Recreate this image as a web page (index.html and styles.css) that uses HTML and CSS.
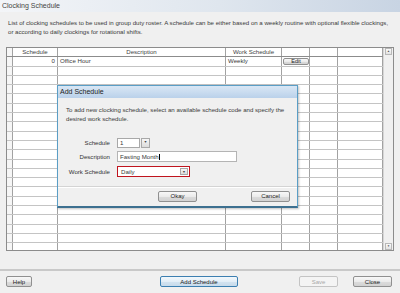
FILE: index.html
```html
<!DOCTYPE html>
<html lang="en">
<head>
  <meta charset="UTF-8">
  <title>Clocking Schedule</title>
  <link rel="stylesheet" href="styles.css">
</head>
<body>

  <div class="titlebar">Clocking Schedule</div>

  <p class="intro">List of clocking schedules to be used in group duty roster. A schedule can be either based on a weekly routine with optional flexible clockings,<br>or according to daily clockings for rotational shifts.</p>

  <div class="grid">
    <div class="rows">
      <div class="row head"><span></span><span>Schedule</span><span>Description</span><span>Work Schedule</span><span></span><span></span><span></span></div>
      <div class="row"><span></span><span class="num">0</span><span>Office Hour</span><span>Weekly</span><span class="cell-btn"><button class="btn btn-edit">Edit</button></span><span></span><span></span></div>
      <div class="row"><span></span><span></span><span></span><span></span><span></span><span></span><span></span></div>
      <div class="row"><span></span><span></span><span></span><span></span><span></span><span></span><span></span></div>
      <div class="row"><span></span><span></span><span></span><span></span><span></span><span></span><span></span></div>
      <div class="row"><span></span><span></span><span></span><span></span><span></span><span></span><span></span></div>
      <div class="row"><span></span><span></span><span></span><span></span><span></span><span></span><span></span></div>
      <div class="row"><span></span><span></span><span></span><span></span><span></span><span></span><span></span></div>
      <div class="row"><span></span><span></span><span></span><span></span><span></span><span></span><span></span></div>
      <div class="row"><span></span><span></span><span></span><span></span><span></span><span></span><span></span></div>
      <div class="row"><span></span><span></span><span></span><span></span><span></span><span></span><span></span></div>
      <div class="row"><span></span><span></span><span></span><span></span><span></span><span></span><span></span></div>
      <div class="row"><span></span><span></span><span></span><span></span><span></span><span></span><span></span></div>
      <div class="row"><span></span><span></span><span></span><span></span><span></span><span></span><span></span></div>
      <div class="row"><span></span><span></span><span></span><span></span><span></span><span></span><span></span></div>
      <div class="row"><span></span><span></span><span></span><span></span><span></span><span></span><span></span></div>
      <div class="row"><span></span><span></span><span></span><span></span><span></span><span></span><span></span></div>
      <div class="row"><span></span><span></span><span></span><span></span><span></span><span></span><span></span></div>
      <div class="row"><span></span><span></span><span></span><span></span><span></span><span></span><span></span></div>
      <div class="row"><span></span><span></span><span></span><span></span><span></span><span></span><span></span></div>
      <div class="row"><span></span><span></span><span></span><span></span><span></span><span></span><span></span></div>
      <div class="row"><span></span><span></span><span></span><span></span><span></span><span></span><span></span></div>
    </div>
    <div class="scrollbar">
      <span class="scroll-btn">&#9650;</span>
      <span class="scroll-btn">&#9660;</span>
    </div>
  </div>

  <div class="footer">
    <div class="footer-left"><button class="btn btn-help">Help</button></div>
    <button class="btn btn-add">Add Schedule</button>
    <div class="footer-right">
      <button class="btn btn-small" disabled>Save</button>
      <button class="btn btn-small">Close</button>
    </div>
  </div>

  <div class="dialog">
    <div class="dialog-title">Add Schedule</div>
    <div class="dialog-body">
      <p class="dialog-text">To add new clocking schedule, select an available schedule code and specify the<br>desired work schedule.</p>
      <div class="form">
        <label>Schedule</label>
        <div class="combo combo-code">
          <span class="combo-value">1</span>
          <span class="combo-btn">&#9660;</span>
        </div>
        <label>Description</label>
        <div class="textbox">Fasting Month<span class="caret"></span></div>
        <label>Work Schedule</label>
        <div class="combo combo-work">
          <span class="combo-value">Daily</span>
          <span class="combo-btn">&#9660;</span>
        </div>
      </div>
    </div>
    <div class="dialog-footer">
      <span></span>
      <button class="btn btn-small">Okay</button>
      <button class="btn btn-small btn-cancel">Cancel</button>
    </div>
  </div>

</body>
</html>
```

FILE: styles.css
```css
* {
  box-sizing: border-box;
}

body {
  margin: 0;
  width: 400px;
  height: 293px;
  overflow: hidden;
  position: relative;
  background: #f0f0f0;
  font-family: "Liberation Sans", Arial, sans-serif;
  font-size: 6.1px;
  color: #3a3a3a;
}

.titlebar {
  height: 12px;
  line-height: 12px;
  padding-left: 2px;
  font-size: 7px;
  color: #444;
  background: linear-gradient(to right, #f3f5f8, #dfe6ee 55%, #c8d4e3);
}

.intro {
  margin: 6px 0 0 8px;
  line-height: 9px;
  white-space: nowrap;
}

/* grid */

.grid {
  display: flex;
  width: 388px;
  height: 204px;
  margin: 11px 0 0 6px;
  border: 1px solid #8c8c8c;
  background: #fff;
}

.rows {
  flex: 1;
  overflow: hidden;
}

.row {
  display: grid;
  grid-template-columns: 6px 45px 168px 56px 28px 28px 45px;
  height: 9.3px;
  border-bottom: 1px solid #c4c4c4;
}

.row span {
  border-right: 1px solid #a2a2a2;
  padding: 0 2px;
  line-height: 8px;
  white-space: nowrap;
}

.row span:first-child {
  background: #f6f6f6;
}

.row.head {
  border-bottom-color: #8c8c8c;
}

.row.head span {
  text-align: center;
  color: #444;
}

.row .num {
  text-align: right;
}

.row .cell-btn {
  padding: 0 0 0 1px;
}

.scrollbar {
  width: 10px;
  display: flex;
  flex-direction: column;
  justify-content: space-between;
  background: #f0f0f0;
  border-left: 1px solid #d6d6d6;
}

.scroll-btn {
  height: 7px;
  margin: 0 1px;
  border: 1px solid #b8b8b8;
  background: linear-gradient(#fafafa, #e2e2e2);
  font-size: 3px;
  line-height: 5px;
  text-align: center;
  color: #555;
}

/* buttons */

.btn {
  height: 11px;
  padding: 0;
  font-family: inherit;
  font-size: 6px;
  color: #222;
  border: 1px solid #909090;
  border-radius: 2px;
  background: linear-gradient(#f8f8f8, #ebebeb 50%, #dcdcdc 51%, #d2d2d2);
}

.btn:disabled {
  color: #a8a8a8;
  border-color: #c4c4c4;
  background: #f4f4f4;
}

.btn-edit {
  width: 26px;
  height: 7px;
  margin-top: 0.5px;
  font-size: 5.5px;
  line-height: 5px;
}

.btn-help {
  width: 26px;
}

.btn-add {
  width: 78px;
  border-color: #3c7fb1;
  background: linear-gradient(#f2f8fc, #e3eef7 50%, #d3e3f0 51%, #c8dbeb);
}

.btn-small {
  width: 39px;
}

.footer {
  display: grid;
  grid-template-columns: 1fr auto 1fr;
  align-items: center;
  height: 23px;
  margin-top: 18px;
  padding: 0 8px 0 6px;
  border-top: 2px solid #c9c9c9;
}

.footer-right {
  display: flex;
  justify-content: flex-end;
  gap: 15px;
}

/* dialog */

.dialog {
  position: absolute;
  left: 57px;
  top: 85px;
  width: 241px;
  height: 123px;
  background: #f0f0f0;
  border: 1px solid #5a9ec6;
  border-bottom: 2px solid #3d7090;
  box-shadow: 1px 1px 2px rgba(0, 0, 0, 0.25);
}

.dialog-title {
  height: 12px;
  line-height: 12px;
  padding-left: 2px;
  font-size: 7px;
  color: #222;
  background: linear-gradient(#d9e7f5, #bad1ea);
}

.dialog-body {
  height: 88px;
  padding: 8px 8px 0;
}

.dialog-text {
  margin: 0;
  line-height: 8.5px;
  white-space: nowrap;
}

.form {
  display: grid;
  grid-template-columns: 44px auto;
  column-gap: 7px;
  row-gap: 3.5px;
  align-items: center;
  justify-items: start;
  margin-top: 15px;
}

.form label {
  justify-self: end;
  color: #333;
}

.combo {
  display: flex;
  align-items: stretch;
}

.combo-value {
  background: #fff;
  padding-left: 2px;
}

.combo-btn {
  font-size: 3.5px;
  text-align: center;
  color: #444;
  background: linear-gradient(#f6f6f6, #dcdcdc);
  border: 1px solid #a8a8a8;
}

.combo-code {
  height: 9.5px;
  line-height: 7.5px;
}

.combo-code .combo-value {
  width: 23px;
  border: 1px solid #a8a8a8;
}

.combo-code .combo-btn {
  width: 9px;
  margin-left: 1px;
  line-height: 7px;
}

.textbox {
  width: 120px;
  height: 11px;
  line-height: 9px;
  padding-left: 2px;
  background: #fff;
  border: 1px solid #b4b4b4;
}

.caret {
  display: inline-block;
  width: 0;
  height: 6px;
  margin-left: 0.5px;
  vertical-align: -1px;
  border-left: 0.6px solid #000;
}

.combo-work {
  width: 73px;
  height: 11px;
  line-height: 8px;
  padding: 1px;
  border: 1px solid #c0141e;
  background: #fff;
}

.combo-work .combo-value {
  flex: 1;
}

.combo-work .combo-btn {
  width: 8px;
  line-height: 6px;
}

.dialog-footer {
  display: grid;
  grid-template-columns: 1fr auto 1fr;
  align-items: center;
  height: 20px;
  padding: 0 7px 1px;
  border-top: 1px solid #d4d4d4;
  box-shadow: inset 0 1px 0 #fff;
}

.btn-cancel {
  justify-self: end;
}
```
